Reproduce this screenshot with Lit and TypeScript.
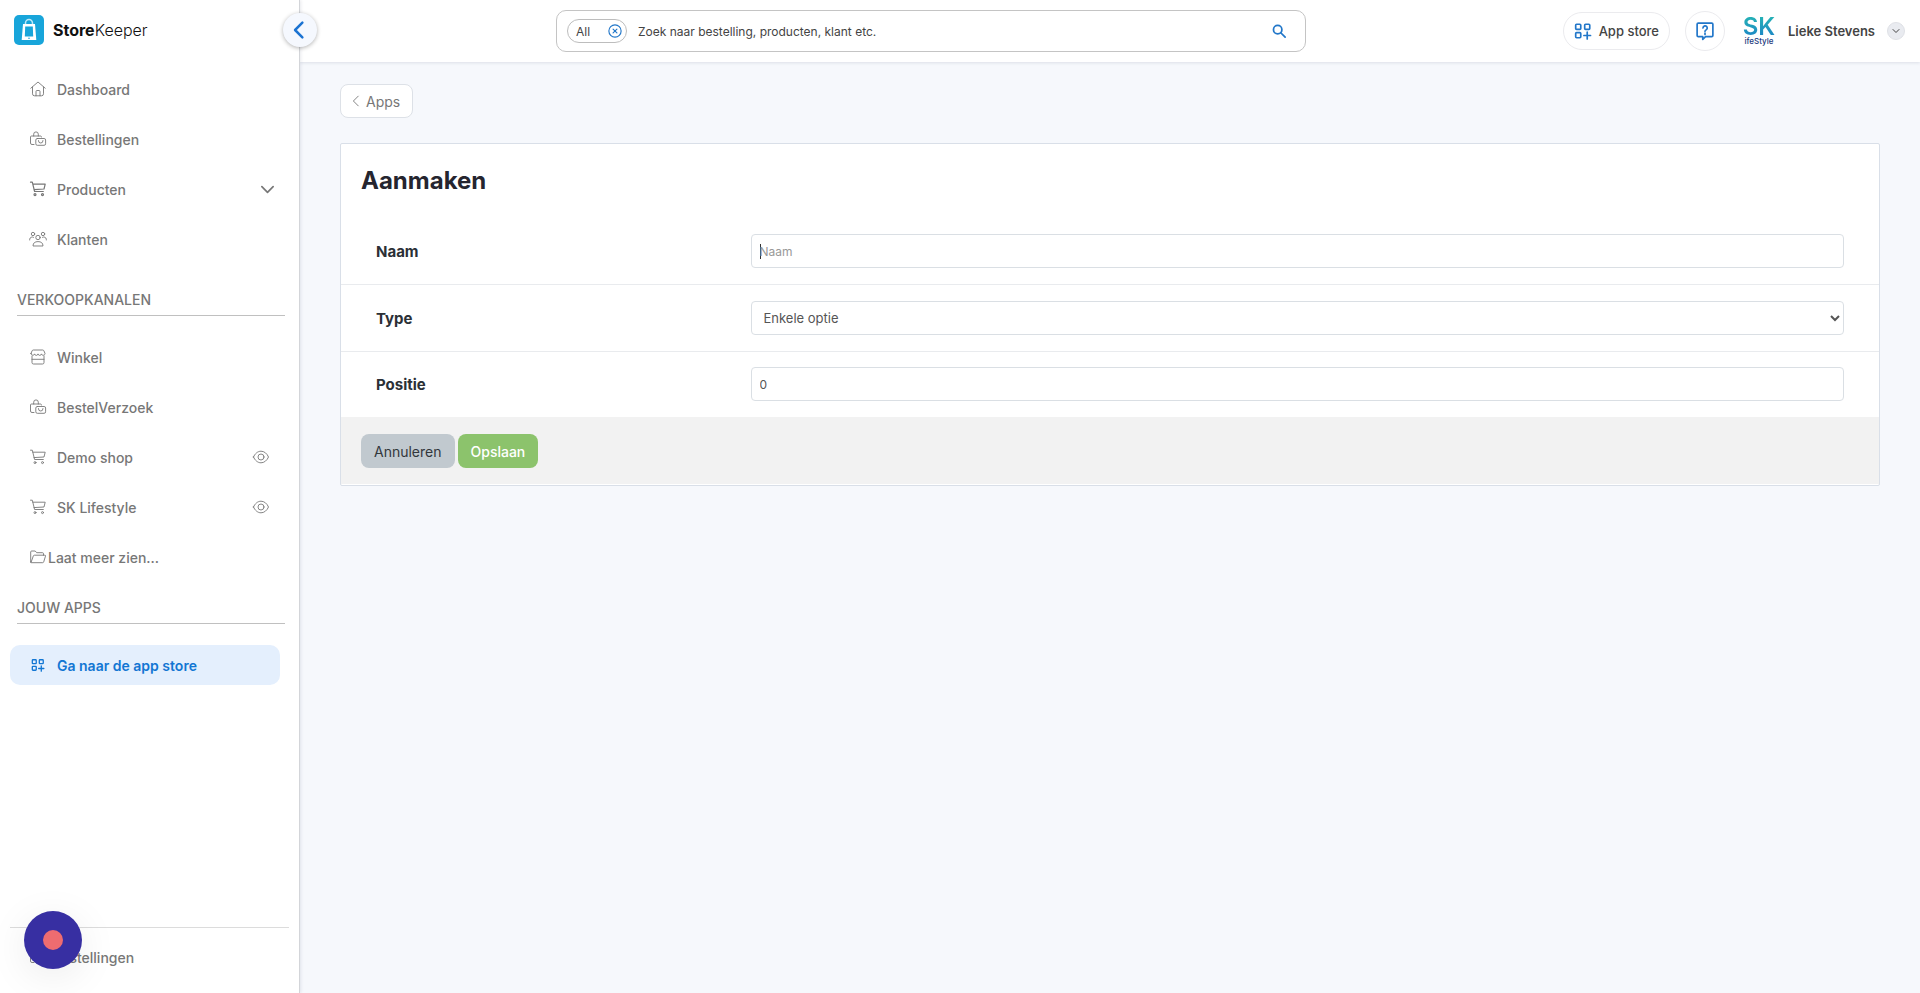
import { LitElement, html, svg, css, nothing } from "lit";
import { customElement, property } from "lit/decorators.js";

const icons: Record<string, unknown> = {
  home: svg`<path d="M.8 7.2 8 1l7.200 6.200M2.500 6v6.800a2 2 0 0 0 2 2h7a2 2 0 0 0 2-2V6M6 14.800V10.500a1 1 0 0 1 1-1h2a1 1 0 0 1 1 1v4.300"/>`,
  orders: svg`<path d="M4 13.500H2A1.500 1.500 0 0 1 .500 12V6a1 1 0 0 1 1-1h9a1 1 0 0 1 1 1M3.700 5V3.200a2.300 2.300 0 0 1 4.600 0V5"/><rect x="5.800" y="7.500" width="9.800" height="6.800" rx="1.500"/><path d="M8.500 9.500v.300a2.200 2.200 0 0 0 4.400 0v-.300"/>`,
  cart: svg`<path d="M.500 1.200h1.800l2.300 9.300h8.700M2.800 3.200h12.400l-1.200 4.800-10 .600"/><circle cx="5" cy="13.600" r="1"/><circle cx="12.500" cy="13.600" r="1"/>`,
  people: svg`<circle cx="3" cy="3" r="1.700"/><circle cx="13" cy="3" r="1.700"/><circle cx="8" cy="6.500" r="2.200"/><path d="M-.300 9V8.200a2.500 2.500 0 0 1 3.800-1.900M16.300 9V8.200a2.500 2.500 0 0 0-3.800-1.900M3 14.600c0-2.700 2-4 5-4s5 1.300 5 4z"/>`,
  shop: svg`<path d="M1 4.500 2 2a1.500 1.500 0 0 1 1.300-1h9.400A1.500 1.500 0 0 1 14 2l1 2.500c0 2.200-3.300 2.400-3.500.400-.300 2-3.300 2-3.500 0-.200 2-3.200 2-3.500 0C4.300 6.900 1 6.700 1 4.500zM2 7v6.500A1.500 1.500 0 0 0 3.500 15h9a1.500 1.500 0 0 0 1.500-1.500V7M2 10.300h12"/>`,
  folder: svg`<path d="M.700 13V3a1 1 0 0 1 1-1h3.500l1.500 1.700h5.800a1 1 0 0 1 1 1v1.500M1 13.500 3.300 7a1.200 1.200 0 0 1 1.100-.800h10.400a.700.700 0 0 1 .700.900l-1.800 5.800a1.200 1.200 0 0 1-1.100.800H1.500a.800.800 0 0 1-.800-.900"/>`,
  eye: svg`<path d="M.500 8C2 4.500 4.800 2.200 8 2.200S14 4.500 15.500 8C14 11.500 11.200 13.800 8 13.800S2 11.500.500 8z"/><circle cx="8" cy="8" r="3"/>`,
  apps: svg`<rect x="1.500" y="2" width="4.500" height="4.500" rx=".8"/><rect x="9.500" y="2" width="4.500" height="4.500" rx=".8"/><rect x="1.500" y="9.500" width="4.500" height="4.500" rx=".8"/><path d="M11.750 9v6M8.800 12h5.900"/>`,
  down: svg`<path d="m2 5 6 6 6-6"/>`,
  left: svg`<path d="M11 1.500 4.500 8l6.500 6.500"/>`,
  clear: svg`<circle cx="8" cy="8" r="7"/><path d="m5.800 5.800 4.400 4.400M10.200 5.800l-4.400 4.400"/>`,
  search: svg`<circle cx="6.500" cy="6.500" r="4.800"/><path d="m10 10 5 5"/>`,
  help: svg`<path d="M2 1h12a1 1 0 0 1 1 1v10a1 1 0 0 1-1 1H8.500L6 15.500V13H2a1 1 0 0 1-1-1V2a1 1 0 0 1 1-1z"/><path d="M6.200 5.300a1.900 1.900 0 1 1 2.800 1.700c-.700.400-1 .700-1 1.300"/><path d="M8 9.800v1.200"/>`,
};

@customElement("sk-icon")
class SkIcon extends LitElement {
  @property() name = "home";
  static styles = css`
    :host { display: inline-flex; flex: none; width: 16px; height: 16px; }
    svg { width: 100%; height: 100%; overflow: visible; fill: none; stroke: currentColor;
      stroke-width: var(--stroke, .9); stroke-linecap: round; stroke-linejoin: round; }
  `;
  render() {
    return html`<svg viewBox="0 0 16 16" aria-hidden="true">${icons[this.name]}</svg>`;
  }
}

@customElement("sk-sidebar")
class SkSidebar extends LitElement {
  static styles = css`
    :host { display: flex; flex-direction: column; box-sizing: border-box; width: 300px; background: #fff;
      border-right: 1px solid #d3d5d9; box-shadow: 1px 0 3px rgba(40, 50, 80, .1); position: relative; z-index: 2; }
    .brand { display: flex; align-items: center; gap: 9px; height: 60px; padding-left: 14px;
      color: #111; text-decoration: none; font-size: 16px; }
    .brand svg { width: 30px; height: 30px; }
    .brand b { font-weight: 700; }
    .brand .light { font-weight: 300; }
    .toggle { position: absolute; right: -18px; top: 13px; width: 34px; height: 34px; padding: 0 2px 0 0; border: 0;
      border-radius: 50%; background: #f5f8fe; color: #1b73d2; box-shadow: 0 1px 4px rgba(0, 0, 0, .3);
      display: flex; align-items: center; justify-content: center; --stroke: 2.2; }
    .toggle sk-icon { width: 18px; height: 18px; }
    nav { display: flex; flex-direction: column; flex: 1; padding: 9px 10px 16px; }
    ul { list-style: none; margin: 0; padding: 0; display: flex; flex-direction: column; gap: 10px; }
    li { display: flex; align-items: center; position: relative; margin-right: 9px; }
    a.item { display: flex; align-items: center; flex: 1; gap: 11px; height: 40px; padding: 0 10px 0 20px;
      border-radius: 10px; color: #777; font-size: 14px; font-weight: 500; text-decoration: none; }
    a.item span { flex: 1; }
    a.tight { gap: 2px; }
    a.active { background: #e4effd; color: #1276d3; font-weight: 600; --stroke: 1.5; }
    a.active sk-icon { width: 14px; height: 14px; padding: 0 1px; }
    a.cart { --stroke: 1.2; }
    a.item .down { width: 15px; height: 15px; margin-right: -5px; --stroke: 1.8; }
    .eye { margin-right: 1px; }
    h2 { margin: 0 4px 21px 7px; border-bottom: 1px solid #c0c0c0; color: #777; font-size: 14px; line-height: 20px;
      font-weight: 500; padding: 21px 0 5px; }
    h2.first { padding-top: 31px; }
    .foot { margin-top: auto; border-top: 1px solid #dcdcdc; padding-top: 9px; }
    a.foot-item { gap: 6px; }
    .record { position: absolute; left: 24px; bottom: 24px; width: 58px; height: 58px; padding: 0; border: 0;
      border-radius: 50%; background: #372fa2; display: flex; align-items: center; justify-content: center;
      box-shadow: 0 8px 40px rgba(0, 0, 0, .08); }
    .record i { width: 20px; height: 20px; border-radius: 50%; background: #ee6c70; }
  `;
  item(icon: string, label: string, cls = "", end = "") {
    return html`<li><a class="item ${cls}" href="#"><sk-icon name=${icon}></sk-icon><span>${label}</span>
      ${end ? html`<sk-icon class=${end} name=${end}></sk-icon>` : nothing}</a></li>`;
  }
  render() {
    return html`
      <a class="brand" href="#">
        <svg viewBox="0 0 30 30" aria-hidden="true"><rect width="30" height="30" rx="5" fill="#18a5da"/>
          <path d="M11.500 9V8a3.500 3.500 0 0 1 7 0v1" fill="none" stroke="#bfe8f7" stroke-width="1.500"/>
          <path d="M9 9h12l1.300 16H7.700z" fill="#fff"/><path d="M11.200 11.500h7.600l.400 10h-8.400z" fill="#18a5da"/>
          <circle cx="15" cy="23.300" r=".8" fill="#18a5da"/></svg>
        <span><b>Store</b><span class="light">Keeper</span></span>
      </a>
      <button class="toggle" aria-label="Menu inklappen"><sk-icon name="left"></sk-icon></button>
      <nav>
        <ul>
          ${this.item("home", "Dashboard")}
          ${this.item("orders", "Bestellingen")}
          ${this.item("cart", "Producten", "cart", "down")}
          ${this.item("people", "Klanten")}
        </ul>
        <h2 class="first">VERKOOPKANALEN</h2>
        <ul>
          ${this.item("shop", "Winkel")}
          ${this.item("orders", "BestelVerzoek")}
          ${this.item("cart", "Demo shop", "", "eye")}
          ${this.item("cart", "SK Lifestyle", "", "eye")}
          ${this.item("folder", "Laat meer zien...", "tight")}
        </ul>
        <h2>JOUW APPS</h2>
        <ul>${this.item("apps", "Ga naar de app store", "active")}</ul>
        <ul class="foot">${this.item("orders", "Bestellingen", "foot-item")}</ul>
      </nav>
      <button class="record" aria-label="Opnemen"><i></i></button>
    `;
  }
}

@customElement("sk-topbar")
class SkTopbar extends LitElement {
  static styles = css`
    :host { display: grid; grid-template-columns: 256fr 750fr 614fr; align-items: center; height: 62px; background: #fff;
      box-shadow: 0 1px 3px rgba(40, 50, 80, .12); color: #444; }
    button { font: inherit; color: inherit; cursor: pointer; }
    .search { grid-column: 2; display: flex; align-items: center; box-sizing: border-box; height: 42px;
      padding: 0 19px 0 10px; border: 1px solid #c4c4c4; border-radius: 10px; }
    .scope { display: flex; align-items: center; justify-content: space-between; box-sizing: border-box; width: 60px;
      height: 24px; padding: 0 4px 0 8px; background: #fff; border: 1px solid #bdbdbd; border-radius: 12px; font-size: 12px; }
    .scope sk-icon { width: 14px; height: 14px; color: #2277c9; --stroke: 1.3; }
    .search input { flex: 1; min-width: 0; border: 0; outline: 0; padding: 0 11px; background: none;
      font: 12px Inter, sans-serif; color: #444; }
    .search input::placeholder { color: #444; opacity: 1; }
    .go { display: flex; padding: 0; border: 0; background: none; color: #2277c9; --stroke: 2; }
    .go sk-icon { width: 14px; height: 14px; }
    .tools { display: flex; align-items: center; justify-content: flex-end; gap: 15px; padding-right: 15px; }
    .pill { display: flex; align-items: center; justify-content: center; gap: 7px; box-sizing: border-box; height: 38px;
      padding: 0 10px; background: #fff; border: 1px solid #ebebee; border-radius: 19px; font-size: 13px; font-weight: 500; }
    .pill sk-icon { width: 18px; height: 18px; color: #2277c9; --stroke: 1.5; }
    .round { width: 40px; height: 40px; border-radius: 50%; padding: 0; }
    .user { display: flex; align-items: center; gap: 12px; padding: 0; margin-left: 2px; border: 0; background: none;
      font-size: 13px; font-weight: 600; }
    .shoplogo { display: flex; flex-direction: column; align-items: center; width: 34px; }
    .sk { font-size: 24px; line-height: 21px; font-weight: 600; color: transparent;
      background: linear-gradient(#25b3b5, #1d86c6); background-clip: text; -webkit-background-clip: text; }
    .style { font-size: 8px; line-height: 9px; font-weight: 500; color: #253b80; white-space: nowrap; }
    .more { display: flex; align-items: center; justify-content: center; box-sizing: border-box; width: 18px; height: 18px;
      border-radius: 50%; background: #e9ebf0; border: 1px solid #dfe1e6; --stroke: 2; }
    .more sk-icon { width: 8px; height: 8px; }
  `;
  render() {
    return html`
      <form class="search" role="search">
        <button class="scope" type="button">All<sk-icon name="clear"></sk-icon></button>
        <input type="text" aria-label="Zoeken" placeholder="Zoek naar bestelling, producten, klant etc." />
        <button class="go" type="button" aria-label="Zoeken"><sk-icon name="search"></sk-icon></button>
      </form>
      <div class="tools">
        <button class="pill"><sk-icon name="apps"></sk-icon>App store</button>
        <button class="pill round" aria-label="Help"><sk-icon name="help"></sk-icon></button>
        <button class="user">
          <span class="shoplogo"><span class="sk">SK</span><span class="style">ifeStyle</span></span>
          <span>Lieke Stevens</span>
          <span class="more"><sk-icon name="down"></sk-icon></span>
        </button>
      </div>
    `;
  }
}

@customElement("sk-option-form")
class SkOptionForm extends LitElement {
  static styles = css`
    :host { display: block; padding: 22px 40px 40px; }
    .back { display: inline-flex; align-items: center; gap: 4px; box-sizing: border-box; height: 34px; padding: 0 12px 0 9px;
      background: #fff; border: 1px solid #dde1e7; border-radius: 8px; color: #777; font-size: 14px; text-decoration: none;
      --stroke: 1.2; }
    .back sk-icon { width: 12px; height: 12px; }
    .card { margin-top: 25px; padding-bottom: 1px; background: #fff; border: 1px solid #d9dfe8; border-radius: 2px; }
    h1 { margin: 0; padding: 21px 20px; color: #25252f; font-size: 24px; line-height: 32px; font-weight: 700; }
    .row { display: grid; grid-template-columns: 25% 75%; align-items: center; padding: 16px 20px; }
    .row + .row { border-top: 1px solid #e9ebee; }
    .row:last-of-type { padding-top: 15px; }
    label { padding: 0 15px; color: #2b3036; font-size: 15px; font-weight: 700; }
    .control { display: flex; padding: 0 15px; }
    input, select { flex: 1; min-width: 0; box-sizing: border-box; height: 34px; padding: 0 8px; border: 1px solid #dadfe4;
      border-radius: 4px; background-color: #fff; outline: 0; color: #555; font: 12px Inter, sans-serif; }
    select { font-size: 13px; padding: 0 0 0 8px; }
    input::placeholder { color: #999; opacity: 1; }
    .caret { background-image: linear-gradient(#333, #333); background-size: 1px 15px; background-position: 8px center;
      background-repeat: no-repeat; caret-color: transparent; }
    footer { display: flex; gap: 3px; padding: 17px 20px 16px; background: #f2f2f2; }
    footer button { height: 34px; padding: 0 13px; border: 0; border-radius: 8px; font: 14px Inter, sans-serif; }
    .cancel { background: #c1c9cf; color: #32373c; }
    .save { background: #8cc36c; color: #fff; }
    footer .save { font-weight: 500; }
  `;
  render() {
    return html`
      <a class="back" href="#"><sk-icon name="left"></sk-icon>Apps</a>
      <form class="card">
        <h1>Aanmaken</h1>
        <div class="row"><label for="naam">Naam</label>
          <div class="control"><input class="caret" id="naam" type="text" placeholder="Naam" /></div></div>
        <div class="row"><label for="type">Type</label>
          <div class="control"><select id="type"><option>Enkele optie</option></select></div></div>
        <div class="row"><label for="positie">Positie</label>
          <div class="control"><input id="positie" type="text" inputmode="numeric" value="0" /></div></div>
        <footer>
          <button class="cancel" type="button">Annuleren</button>
          <button class="save" type="button">Opslaan</button>
        </footer>
      </form>
    `;
  }
}

@customElement("app-root")
class AppRoot extends LitElement {
  static styles = css`
    :host { display: grid; grid-template-columns: auto minmax(0, 1fr); min-height: 100vh; background: #f6f8fc;
      font-family: Inter, "Liberation Sans", sans-serif; }
  `;
  render() {
    return html`<sk-sidebar></sk-sidebar>
      <div><sk-topbar></sk-topbar><main><sk-option-form></sk-option-form></main></div>`;
  }
}
